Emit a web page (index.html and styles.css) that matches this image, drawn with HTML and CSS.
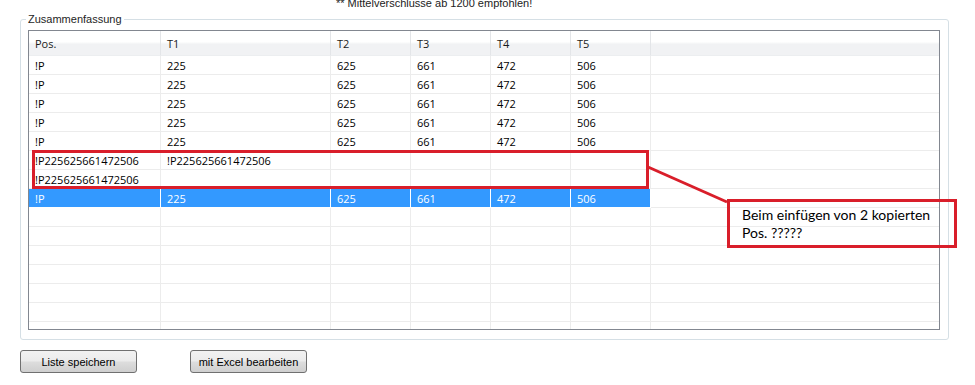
FILE: index.html
```html
<!DOCTYPE html>
<html lang="de">
<head>
  <meta charset="UTF-8" />
  <title>Zusammenfassung</title>
  <link rel="stylesheet" href="styles.css">
</head>
<body>

  <!-- Hinweis oben -->
  <div class="note">** Mittelverschlusse ab 1200 empfohlen!</div>

  <fieldset class="group">
    <legend>Zusammenfassung</legend>

    <div class="grid">
      <table>
        <colgroup>
          <col class="c-pos"><col class="c-t1"><col class="c-t"><col class="c-t"><col class="c-t"><col class="c-t"><col>
        </colgroup>
        <thead>
          <tr><th>Pos.</th><th>T1</th><th>T2</th><th>T3</th><th>T4</th><th>T5</th><th></th></tr>
        </thead>
        <tbody>
          <tr><td>!P</td><td>225</td><td>625</td><td>661</td><td>472</td><td>506</td><td></td></tr>
          <tr><td>!P</td><td>225</td><td>625</td><td>661</td><td>472</td><td>506</td><td></td></tr>
          <tr><td>!P</td><td>225</td><td>625</td><td>661</td><td>472</td><td>506</td><td></td></tr>
          <tr><td>!P</td><td>225</td><td>625</td><td>661</td><td>472</td><td>506</td><td></td></tr>
          <tr><td>!P</td><td>225</td><td>625</td><td>661</td><td>472</td><td>506</td><td></td></tr>
          <tr><td>!P225625661472506</td><td>!P225625661472506</td><td></td><td></td><td></td><td></td><td></td></tr>
          <tr><td>!P225625661472506</td><td></td><td></td><td></td><td></td><td></td><td></td></tr>
          <tr class="selected"><td>!P</td><td>225</td><td>625</td><td>661</td><td>472</td><td>506</td><td></td></tr>
          <tr><td></td><td></td><td></td><td></td><td></td><td></td><td></td></tr>
          <tr><td></td><td></td><td></td><td></td><td></td><td></td><td></td></tr>
          <tr><td></td><td></td><td></td><td></td><td></td><td></td><td></td></tr>
          <tr><td></td><td></td><td></td><td></td><td></td><td></td><td></td></tr>
          <tr><td></td><td></td><td></td><td></td><td></td><td></td><td></td></tr>
          <tr><td></td><td></td><td></td><td></td><td></td><td></td><td></td></tr>
          <tr><td></td><td></td><td></td><td></td><td></td><td></td><td></td></tr>
        </tbody>
      </table>
    </div>
  </fieldset>

  <div class="actions">
    <button class="btn">Liste speichern</button>
    <button class="btn">mit Excel bearbeiten</button>
  </div>

  <!-- Markierung + Kommentar -->
  <div class="mark"></div>
  <svg class="pointer" width="90" height="45" viewBox="0 0 90 45">
    <line x1="2" y1="3" x2="81" y2="38" stroke="#d91e2a" stroke-width="3"/>
  </svg>
  <div class="callout">Beim einfügen von 2 kopierten<br>Pos. ?????</div>

</body>
</html>
```

FILE: styles.css
```css
body {
  margin: 0;
  background: #fff;
  font-family: "Liberation Sans", Arial, sans-serif;
  font-size: 11px;
  color: #000;
  overflow: hidden;
}
.note {
  margin-top: -3px;
  height: 16px;
  line-height: 13px;
  padding-left: 336px;
  color: #222;
}
.group {
  margin: 0 26px 0 20px;
  padding: 4px 8px 9px 7px;
  border: 1px solid #d5dfe5;
  border-radius: 3px;
}
.group legend {
  margin-left: -2px;
  padding: 0 2px;
  line-height: 13px;
  color: #1e1e1e;
}
.grid {
  height: 298px;
  border: 1px solid #828790;
  overflow: hidden;
}
.grid table {
  width: 910px;
  table-layout: fixed;
  border-collapse: separate;
  border-spacing: 0;
  font-family: "Open Sans", "Noto Sans", sans-serif;
  font-size: 11px;
}
.c-pos { width: 132px; }
.c-t1 { width: 170px; }
.c-t { width: 80px; }
.grid th,
.grid td {
  padding: 0 0 0 6px;
  text-align: left;
  white-space: nowrap;
  overflow: hidden;
}
.grid th {
  height: 24px;
  font-weight: normal;
  color: #1a1a1a;
  background: linear-gradient(#ffffff 0%, #ffffff 45%, #f1f2f4 55%, #f1f2f4 100%);
  border-right: 1px solid #e3e5e8;
  border-bottom: 1px solid #eceef0;
}
.grid th:last-child { border-right: none; }
.grid td {
  height: 18px;
  border-right: 1px solid #ececec;
  border-bottom: 1px solid #ececec;
  color: #000;
}
.grid td:last-child { border-right: none; }
.grid tr.selected td {
  background: #3399ff;
  color: #fff;
  border-right-color: #fff;
  border-bottom-color: #fff;
}
.grid tr.selected td:last-child {
  background: #fff;
  border-bottom-color: #ececec;
}
.actions {
  display: flex;
  gap: 53px;
  margin: 10px 0 0 20px;
}
.btn {
  width: 117px;
  height: 23px;
  padding: 0;
  font-family: "Liberation Sans", Arial, sans-serif;
  font-size: 11px;
  color: #000;
  border: 1px solid #707070;
  border-radius: 3px;
  background: linear-gradient(#f2f2f2 0%, #ebebeb 48%, #dddddd 52%, #cfcfcf 100%);
}
.mark {
  position: absolute;
  left: 32px;
  top: 150px;
  width: 611px;
  height: 33px;
  border: 3px solid #d91e2a;
}
.pointer {
  position: absolute;
  left: 646px;
  top: 164px;
}
.callout {
  position: absolute;
  left: 727px;
  top: 199px;
  width: 212px;
  height: 43px;
  padding: 0 0 0 12px;
  border: 3px solid #d91e2a;
  font-family: Lato, "Open Sans", sans-serif;
  font-size: 14px;
  line-height: 18px;
  display: flex;
  flex-direction: column;
  justify-content: center;
}
```
